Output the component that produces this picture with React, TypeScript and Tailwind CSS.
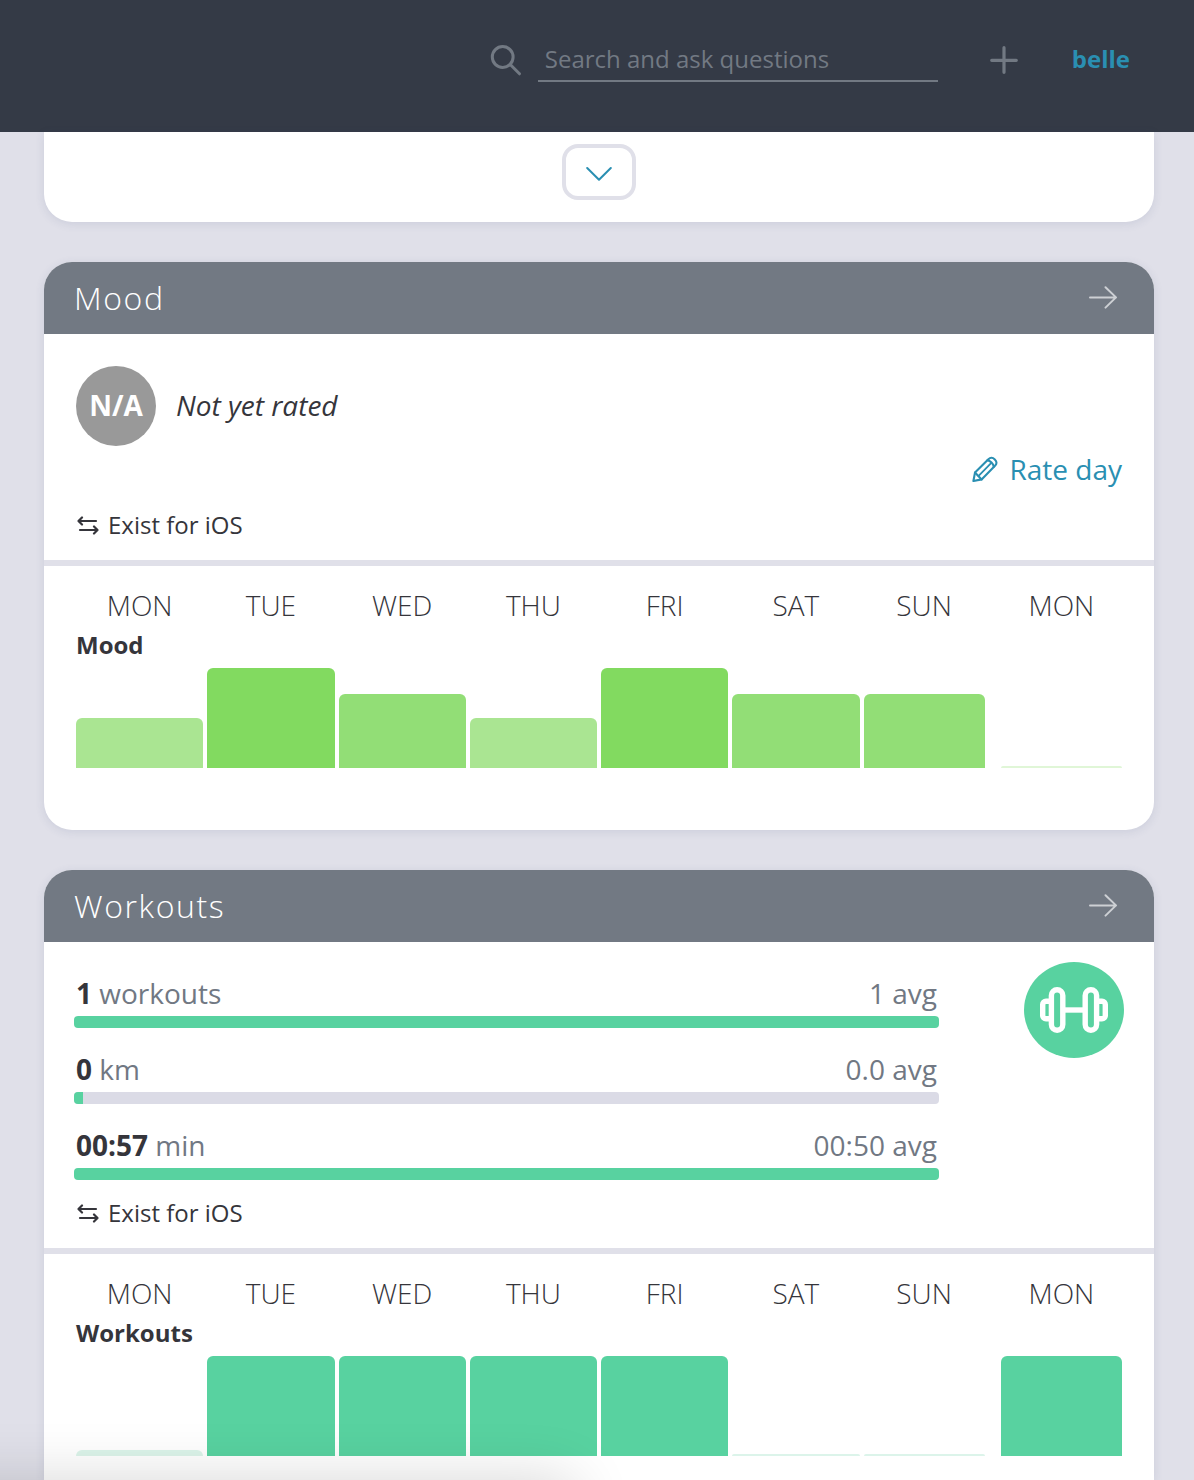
import React from 'react';

type Day = {
  label: string;
  height: number;
  color: string;
};

type Stat = {
  value: string;
  unit: string;
  average: string;
  percent: number;
};

const moodDays: Day[] = [
  { label: 'MON', height: 50, color: 'bg-[#aae592]' },
  { label: 'TUE', height: 100, color: 'bg-[#82da60]' },
  { label: 'WED', height: 74, color: 'bg-[#92de76]' },
  { label: 'THU', height: 50, color: 'bg-[#aae592]' },
  { label: 'FRI', height: 100, color: 'bg-[#82da60]' },
  { label: 'SAT', height: 74, color: 'bg-[#92de76]' },
  { label: 'SUN', height: 74, color: 'bg-[#92de76]' },
  { label: 'MON', height: 2, color: 'bg-[#e0f6d7]' },
];

const workoutDays: Day[] = [
  { label: 'MON', height: 6, color: 'bg-[#dcf4ea]' },
  { label: 'TUE', height: 100, color: 'bg-[#58d2a0]' },
  { label: 'WED', height: 100, color: 'bg-[#58d2a0]' },
  { label: 'THU', height: 100, color: 'bg-[#58d2a0]' },
  { label: 'FRI', height: 100, color: 'bg-[#58d2a0]' },
  { label: 'SAT', height: 2, color: 'bg-[#dcf4ea]' },
  { label: 'SUN', height: 2, color: 'bg-[#dcf4ea]' },
  { label: 'MON', height: 100, color: 'bg-[#58d2a0]' },
];

const workoutStats: Stat[] = [
  { value: '1', unit: 'workouts', average: '1 avg', percent: 100 },
  { value: '0', unit: 'km', average: '0.0 avg', percent: 1 },
  { value: '00:57', unit: 'min', average: '00:50 avg', percent: 100 },
];

function SearchIcon() {
  return (
    <svg width="32" height="32" viewBox="0 0 32 32" fill="none" stroke="currentColor" strokeWidth="3" strokeLinecap="round" aria-hidden="true">
      <circle cx="12.7" cy="13" r="10.4" />
      <path d="M20.5 20.8 29.5 29.8" />
    </svg>
  );
}

function PlusIcon() {
  return (
    <svg width="28" height="28" viewBox="0 0 28 28" fill="none" stroke="currentColor" strokeWidth="3.2" strokeLinecap="round" aria-hidden="true">
      <path d="M14 1.7v24.6M1.7 14.3h24.6" />
    </svg>
  );
}

function ArrowIcon() {
  return (
    <svg width="30" height="24" viewBox="0 0 30 24" fill="none" stroke="currentColor" strokeWidth="2" strokeLinecap="round" strokeLinejoin="round" aria-hidden="true">
      <path d="M2 11.4h26M17.5 1.2 28 11.4 17.5 21.6" />
    </svg>
  );
}

function PencilIcon() {
  return (
    <svg width="26" height="26" viewBox="0 0 26 26" fill="none" stroke="currentColor" strokeWidth="2.1" strokeLinecap="round" strokeLinejoin="round" aria-hidden="true">
      <path d="M1.4 25 3 16.6 16.4 3.2C18.4 1.2 20.6 1.2 22.8 3.4c2.2 2.2 2.2 4.400.2 6.400L9.600 23.400Z" />
      <path d="M3 16.6 9.6 23.4M15.4 4.2C18.2 4.600 21.400 7.800 21.800 10.800" />
      <path d="M6.6 19.8 18.6 7.6" strokeWidth="1.8" />
    </svg>
  );
}

function SwapIcon() {
  return (
    <svg width="22" height="20" viewBox="0 0 22 20" fill="none" stroke="currentColor" strokeWidth="2.2" strokeLinecap="round" strokeLinejoin="round" aria-hidden="true">
      <path d="M19 6H1.5M5 2.5 1.5 6 5 9.5" />
      <path d="M3 15h17.5M17 11.5l3.5 3.5-3.5 3.5" />
    </svg>
  );
}

function DumbbellIcon() {
  return (
    <svg width="68" height="46" viewBox="0 0 68 46" fill="none" stroke="currentColor" strokeWidth="5.4" aria-hidden="true">
      <rect x="11.4" y="2.7" width="11.4" height="40.6" rx="5.7" />
      <rect x="45.2" y="2.7" width="11.4" height="40.6" rx="5.7" />
      <path d="M23 23h22" />
      <path d="M11.4 14.3H6a3.3 3.3 0 0 0-3.3 3.3v10.8A3.3 3.3 0 0 0 6 31.7h5.4M56.6 14.3H62a3.3 3.3 0 0 1 3.3 3.3v10.8a3.3 3.3 0 0 1-3.3 3.3h-5.4" />
    </svg>
  );
}

function CardHeader({ title }: { title: string }) {
  return (
    <header className="flex h-[72px] items-center justify-between rounded-t-[28px] bg-[#727983] pl-[30px] pr-9 text-white">
      <h2 className="text-[32px] font-light leading-10 tracking-wider">{title}</h2>
      <a href="#" aria-label={`Open ${title}`} className="text-[#cdd0d4]">
        <ArrowIcon />
      </a>
    </header>
  );
}

function Source() {
  return (
    <div className="flex h-[68px] items-center gap-[9px] px-[3px] pb-0.5 text-[24px]">
      <SwapIcon />
      <span>Exist for iOS</span>
    </div>
  );
}

function WeekChart({ name, days }: { name: string; days: Day[] }) {
  const inset = (i: number) => (i === 6 ? 'pr-1.5' : i === 7 ? 'pl-1.5' : '');

  return (
    <div className="border-t-[6px] border-[#e0e0e9] px-8 pt-[19px]">
      <div className="grid grid-cols-8 gap-1 text-center text-[28px] font-light leading-10">
        {days.map((day, i) => (
          <div key={i} className={inset(i)}>{day.label}</div>
        ))}
      </div>
      <h3 className="text-[24px] font-bold leading-10">{name}</h3>
      <div className="mt-[3px] grid h-[100px] grid-cols-8 items-end gap-1">
        {days.map((day, i) => (
          <div key={i} className={inset(i)}>
            <div className={`rounded-t-md ${day.color}`} style={{ height: day.height }} />
          </div>
        ))}
      </div>
    </div>
  );
}

function StatRow({ stat }: { stat: Stat }) {
  return (
    <div>
      <div className="flex justify-between px-0.5 pb-0.5 text-[28px] leading-[42px] text-[#717883]">
        <span>
          <strong className="font-bold text-[#35353b]">{stat.value}</strong> {stat.unit}
        </span>
        <span>{stat.average}</span>
      </div>
      <div className="h-3 overflow-hidden rounded bg-[#dbdbe6]">
        <div className="h-full bg-[#58d2a0]" style={{ width: `${stat.percent}%` }} />
      </div>
    </div>
  );
}

export default function App() {
  return (
    <div className="min-h-screen bg-[#e0e0e9] font-['Open_Sans','Noto_Sans',sans-serif] text-[#35353b]">
      <nav className="flex h-[132px] items-center justify-end bg-[#343a46] pb-3 pr-16 text-[#727983]">
        <label htmlFor="search" aria-label="Search" className="mr-4">
          <SearchIcon />
        </label>
        <input
          id="search"
          type="text"
          placeholder="Search and ask questions"
          className="h-11 w-[400px] border-b-2 border-[#727983] bg-transparent px-[7px] pb-0.5 text-[24px] outline-none placeholder:text-[#727983]"
        />
        <button type="button" aria-label="Add" className="ml-[52px]">
          <PlusIcon />
        </button>
        <a href="#" className="ml-[54px] pb-0.5 text-[24px] font-bold text-[#2a8fb2]">belle</a>
      </nav>

      <main className="flex flex-col gap-10 pl-11 pr-10">
        <section className="flex h-[90px] justify-center rounded-b-[28px] bg-white pt-3 shadow-[0_2px_10px_rgba(60,70,120,0.12)]">
          <button type="button" aria-label="Show more" className="flex h-14 w-[74px] items-center justify-center rounded-2xl border-4 border-[#e0e0e9] pt-0.5 text-[#2a8fb2]">
            <svg width="26" height="16" viewBox="0 0 26 16" fill="none" stroke="currentColor" strokeWidth="2" strokeLinecap="round" strokeLinejoin="round" aria-hidden="true">
              <path d="M1.2 3 13 14.8 24.8 3" />
            </svg>
          </button>
        </section>

        <section className="rounded-[28px] bg-white pb-[62px] shadow-[0_2px_10px_rgba(60,70,120,0.12)]">
          <CardHeader title="Mood" />
          <div className="px-[30px] pt-8">
            <div className="flex items-center gap-5 px-0.5 text-[28px]">
              <div className="flex h-20 w-20 items-center justify-center rounded-full bg-[#999999] pb-0.5 font-bold text-white">N/A</div>
              <em className="pb-0.5">Not yet rated</em>
            </div>
            <div className="flex h-[46px] items-center justify-end px-0.5">
              <a href="#" className="flex items-center gap-[11px] text-[28px] leading-10 text-[#2a8fb2]">
                <PencilIcon />
                Rate day
              </a>
            </div>
            <Source />
          </div>
          <WeekChart name="Mood" days={moodDays} />
        </section>

        <section className="rounded-t-[28px] bg-white pb-6 shadow-[0_2px_10px_rgba(60,70,120,0.12)]">
          <CardHeader title="Workouts" />
          <div className="px-[30px]">
            <div className="flex items-start">
              <div className="flex flex-1 flex-col gap-5 pt-[30px]">
                {workoutStats.map((stat) => (
                  <StatRow key={stat.unit} stat={stat} />
                ))}
              </div>
              <div className="ml-[85px] mt-5 flex h-24 w-[100px] items-center justify-center rounded-[50%] bg-[#58d2a0] text-white">
                <DumbbellIcon />
              </div>
            </div>
            <Source />
          </div>
          <WeekChart name="Workouts" days={workoutDays} />
        </section>
      </main>

      {/* soft shade rising from the status bubble under the window edge */}
      <div className="pointer-events-none fixed -left-24 top-full h-24 w-[670px] shadow-[0_0_60px_rgba(0,0,0,0.16)]" />
    </div>
  );
}
